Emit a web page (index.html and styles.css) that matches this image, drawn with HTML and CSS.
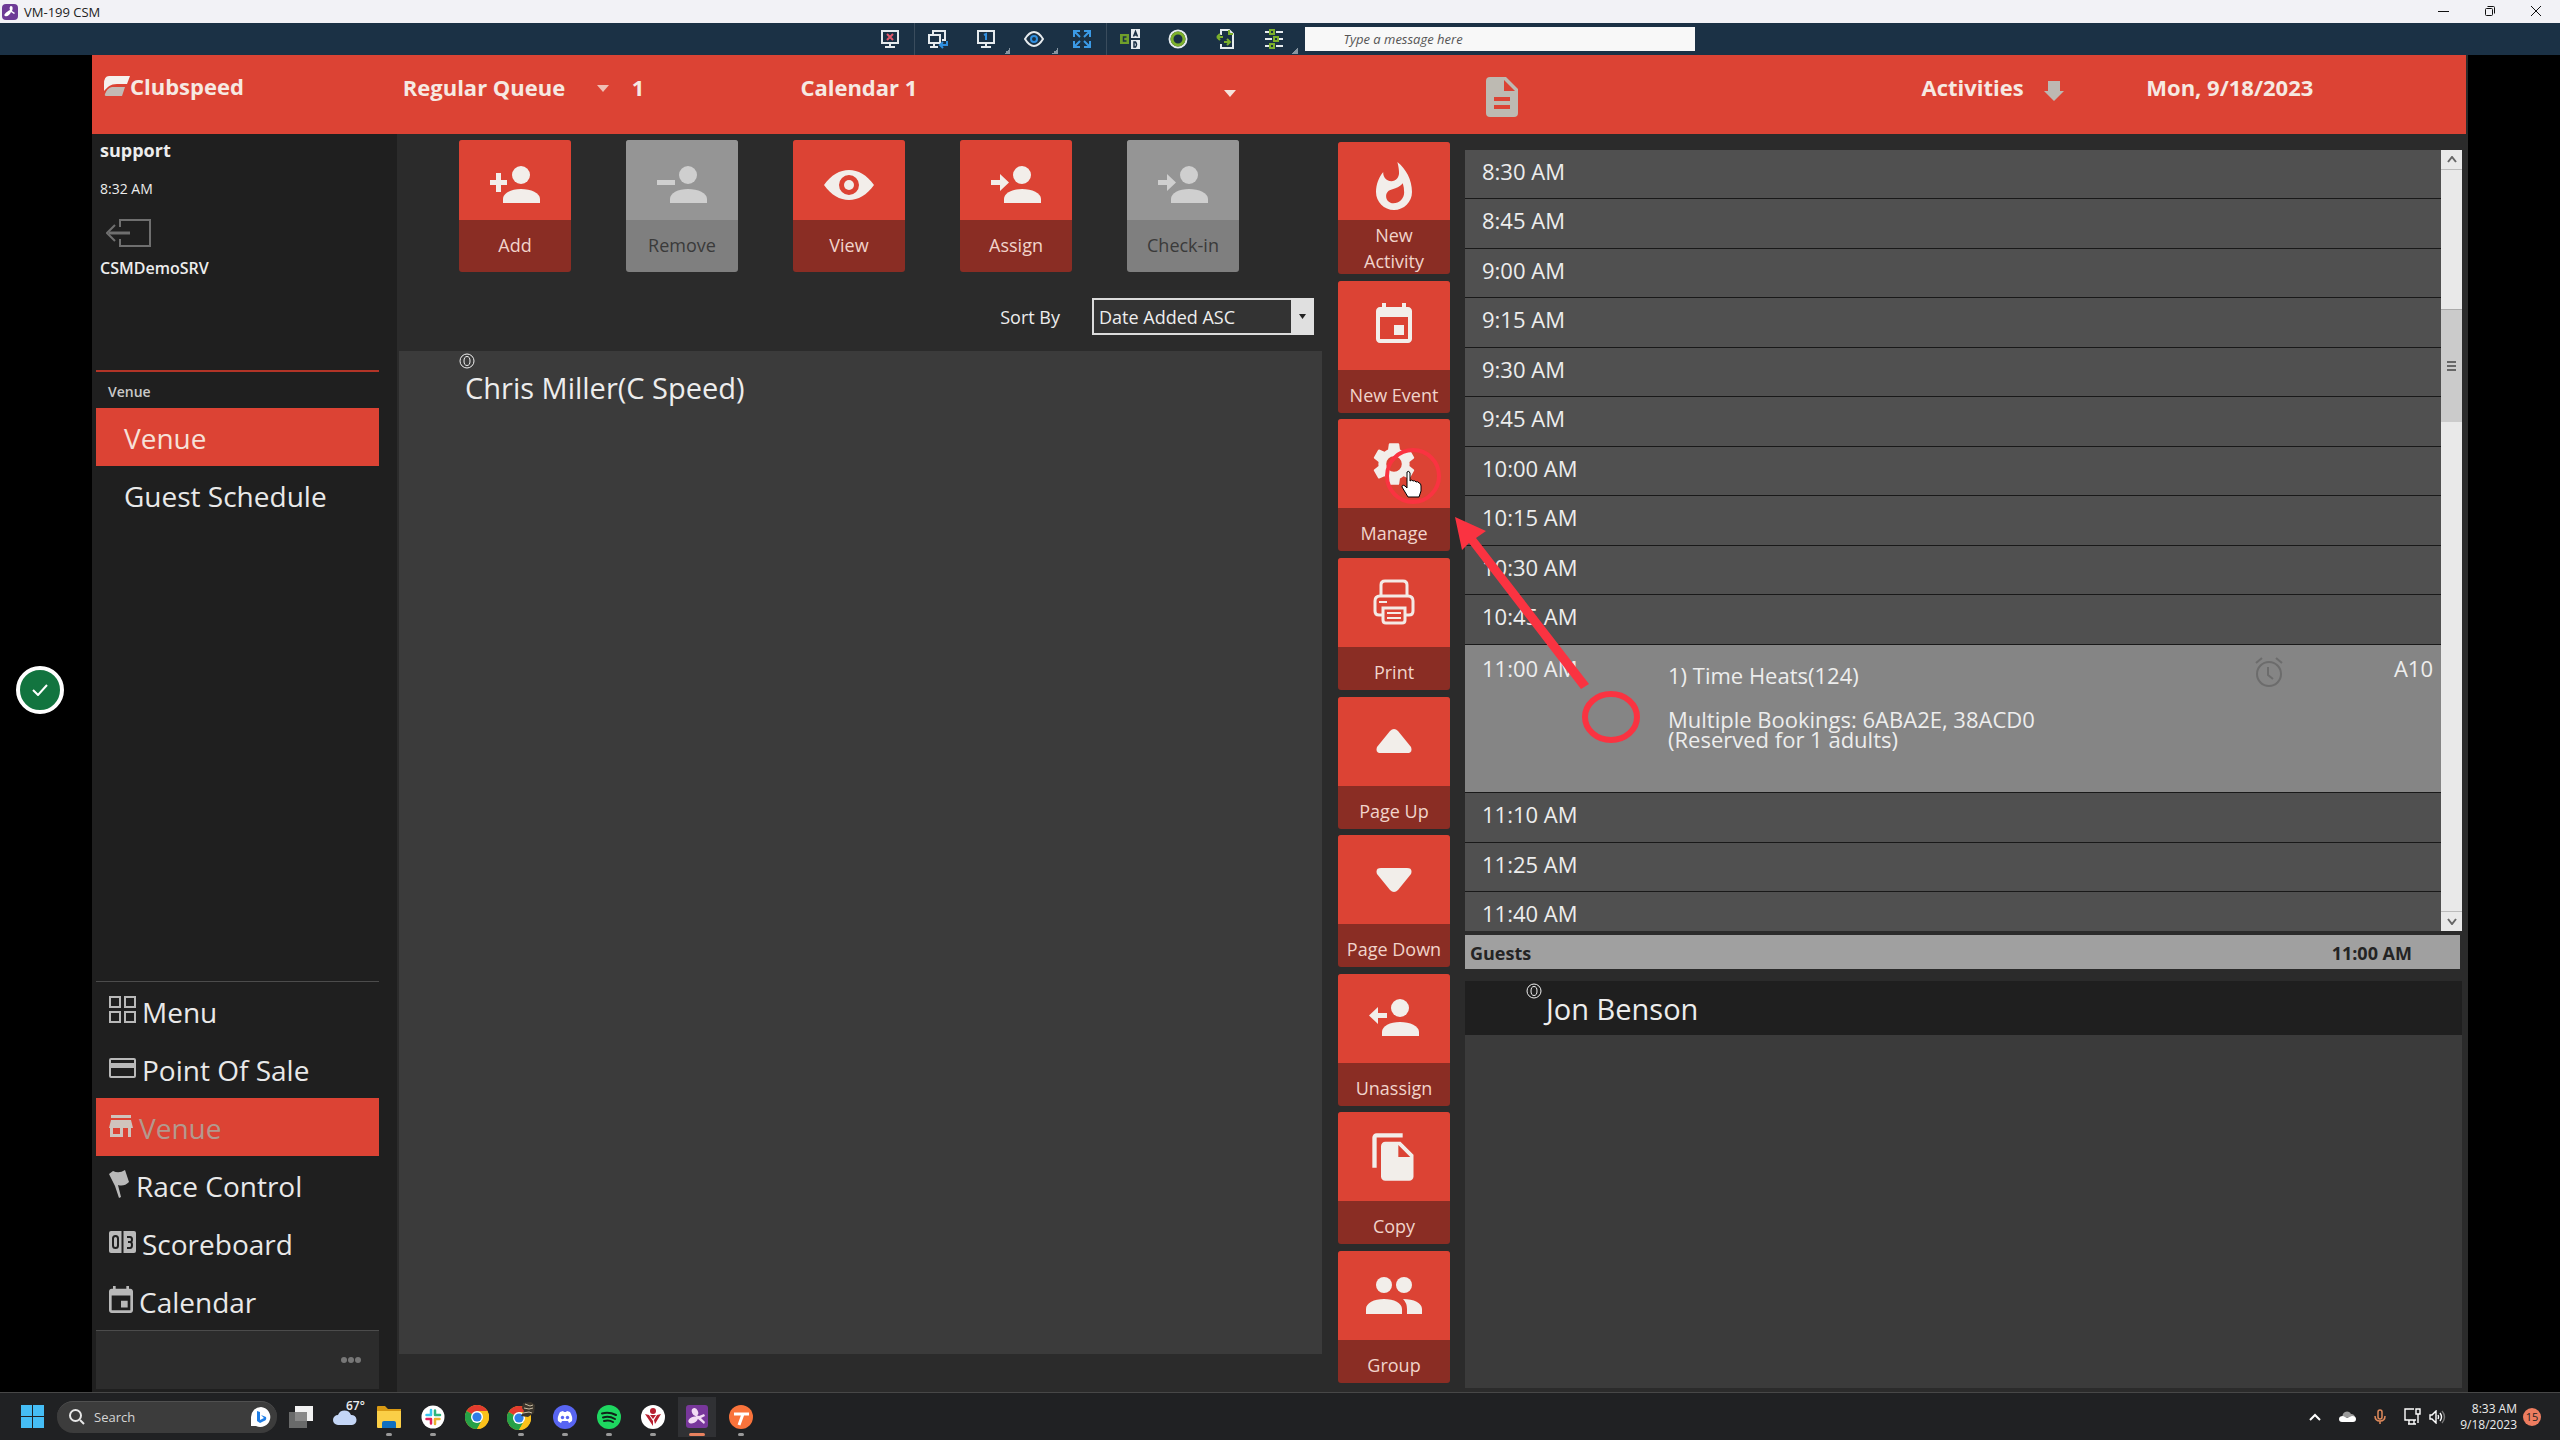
FILE: index.html
```html
<!DOCTYPE html>
<html lang="en">
<head>
<meta charset="utf-8">
<title>VM-199 CSM</title>
<link rel="stylesheet" href="styles.css">
</head>
<body>
<svg class="defs" width="0" height="0" aria-hidden="true">
  <symbol id="person" viewBox="0 0 50 38"><circle cx="31" cy="9" r="9"/><path d="M13 37v-4c0-6 8-10 18-10s19 4 19 10v4z"/></symbol>
  <symbol id="event" viewBox="0 0 24 24"><path d="M17 12h-5v5h5v-5zM16 1v2H8V1H6v2H5c-1.11 0-1.99.9-1.99 2L3 19c0 1.100.89 2 2 2h14c1.100 0 2-.9 2-2V5c0-1.100-.9-2-2-2h-1V1h-2zm3 18H5V8h14v11z"/></symbol>
  <symbol id="chrome" viewBox="0 0 24 24"><circle cx="12" cy="12" r="12" fill="#fbc11a"/><path d="M12 12 1.600 6A12 12 0 0 1 22.400 6z" fill="#e33b2e"/><path d="M12 12 1.600 6A12 12 0 0 0 12 24l5-9z" fill="#26a148"/><path d="M12 6h10.400A12 12 0 0 1 12 24l5.200-9z" fill="#fbc11a"/><circle cx="12" cy="12" r="6" fill="#fff"/><circle cx="12" cy="12" r="4.600" fill="#2f7de9"/></symbol>
  <symbol id="ring" viewBox="0 0 16 16"><g fill="none" stroke="#f0f0f0"><circle cx="8" cy="8" r="7"/><ellipse cx="8" cy="8" rx="3" ry="4.500"/></g></symbol>
</svg>

<header class="titlebar">
  <svg class="app-mark" width="16" height="16" viewBox="0 0 16 16"><rect width="16" height="16" rx="4" fill="#6d3a96"/><path d="M9 2c2 0 2 3 1 5l3 2-1 1-3-2c-1 3-4 5-6 4s1-4 5-6c-1-2 0-4 1-4z" fill="#fff"/></svg>
  <span class="window-title">VM-199 CSM</span>
  <div class="window-controls">
    <button aria-label="Minimize"><svg width="12" height="12" viewBox="0 0 12 12"><path d="M0 6.500h11"/></svg></button>
    <button aria-label="Restore"><svg width="12" height="12" viewBox="0 0 12 12"><rect x="1.500" y="3.500" width="7" height="7" rx="1"/><path d="M3.500 1.500h6q1 0 1 1v6"/></svg></button>
    <button aria-label="Close"><svg width="12" height="12" viewBox="0 0 12 12"><path d="M1 1l10 10M11 1L1 11"/></svg></button>
  </div>
</header>

<nav class="remote-bar" aria-label="Remote session">
  <button class="first" aria-label="Disconnect"><svg width="20" height="20" viewBox="0 0 20 20" fill="none" stroke="#e6ebee" stroke-width="2"><path d="M2 2h16v12H2zM10 14v4M5 18h10"/><path d="M7 5l6 6M13 5l-6 6" stroke="#e2596c"/></svg></button>
  <button class="split" aria-label="Switch screen"><svg width="22" height="20" viewBox="0 0 22 20" fill="none" stroke="#e6ebee" stroke-width="2"><path d="M6 5V2h12v9h-3M2 6h11v8H2zM7 14v4M3 18h8"/><path d="M20 12v4h-6M16 13l-3 3 3 3" stroke="#2f8fe0"/></svg></button>
  <button class="more" aria-label="Monitor 1"><svg width="20" height="20" viewBox="0 0 20 20" fill="none" stroke="#e6ebee" stroke-width="2"><path d="M2 2h16v12H2zM10 14v4M5 18h10"/><path d="M8 6l2-1v6" stroke="#2f8fe0"/></svg></button>
  <button class="more" aria-label="View options"><svg width="20" height="20" viewBox="0 0 20 20" fill="none" stroke="#e6ebee" stroke-width="2"><path d="M1 10c3-5 6-7 9-7s6 2 9 7c-3 5-6 7-9 7s-6-2-9-7z"/><circle cx="10" cy="10" r="3" stroke="#2f8fe0"/></svg></button>
  <button aria-label="Full screen"><svg width="20" height="20" viewBox="0 0 20 20" fill="none" stroke="#3b9ae6" stroke-width="2"><path d="M2 8V2h6M2 2l6 6M12 2h6v6M18 2l-6 6M2 12v6h6M2 18l6-6M18 12v6h-6M18 18l-6-6"/></svg></button>
  <button class="split" aria-label="Send Ctrl Alt Del"><svg width="20" height="20" viewBox="0 0 20 20"><path d="M0 5h9v10H0z" fill="#6f9f2a"/><path d="M11 0h9v9h-9zM11 11h9v9h-9z" fill="#e6ebee"/><g fill="none" stroke="#1b3145" stroke-width="1.500"><path d="M6.500 8h-3v4h3M13.500 7.500l2-5 2 5M14.500 6h2M14 13v5h1.500q2-2.500 0-5z"/></g></svg></button>
  <button aria-label="Session status"><svg width="20" height="20" viewBox="0 0 20 20" fill="none" stroke-width="2"><circle cx="10" cy="10" r="8.500" stroke="#e6ebee"/><circle cx="10" cy="10" r="6" stroke="#7cb02c" stroke-width="3"/></svg></button>
  <button aria-label="File transfer"><svg width="20" height="20" viewBox="0 0 20 20" fill="none" stroke="#e6ebee" stroke-width="2"><path d="M5 6V1h8l4 4v14H5v-4"/><path d="M13 1v4h4M1 8l3-3M1 8l3 3M1 8h6M8 13h6M11 10l3 3-3 3" stroke="#7cb02c"/></svg></button>
  <button class="more" aria-label="Settings"><svg width="20" height="20" viewBox="0 0 20 20" fill="none" stroke="#e6ebee" stroke-width="2"><path d="M1 3h4M12 3h7M1 10h7M15 10h4M1 17h4M12 17h7"/><path d="M6 1h4v4H6zM10 8h4v4h-4zM6 15h4v4H6z" stroke="#7cb02c"/></svg></button>
  <input class="message" type="text" placeholder="Type a message here" aria-label="Message">
</nav>

<div class="stage">
  <div class="app">
    <header class="app-header">
      <a class="logo" href="#"><svg width="27" height="20" viewBox="0 0 27 20"><path d="M6 0h21l-3 8H14C7 8 5 11 1 15V8q0-8 5-8z" fill="#f5f1ee"/><path d="M9 11h13l-3 9H4q-3 0-2-2 2-6 7-7z" fill="#c3bab4"/></svg><span>Clubspeed</span></a>
      <div class="head-cell">
        <select class="queue-select" aria-label="Queue"><option>Regular Queue</option></select>
        <svg class="caret" width="12" height="7" viewBox="0 0 12 7"><path d="M0 0h12L6 7z"/></svg>
        <span class="count">1</span>
      </div>
      <div class="head-cell">
        <select class="calendar-select" aria-label="Calendar"><option>Calendar 1</option></select>
        <svg class="caret low" width="12" height="7" viewBox="0 0 12 7"><path d="M0 0h12L6 7z"/></svg>
      </div>
      <div class="head-cell tall"><button class="bare" aria-label="Notes"><svg width="32" height="40" viewBox="0 0 32 40"><path d="M4 0h16l12 12v24q0 4-4 4H4q-4 0-4-4V4q0-4 4-4z" fill="#bdbab2"/><path d="M18 3v11h11z" fill="#dc4334"/><path d="M8 22h16M8 30h16" stroke="#dc4334" stroke-width="4"/></svg></button></div>
      <div class="head-cell"><span class="activities">Activities</span><button class="bare" aria-label="Scroll down"><svg width="20" height="20" viewBox="0 0 20 20"><path d="M4 0h12v10h4L10 20 0 10h4z" fill="#bdb8b2"/></svg></button></div>
      <div class="head-cell"><span>Mon, 9/18/2023</span></div>
    </header>

    <div class="workspace">
      <aside class="sidebar">
        <section class="user">
          <strong class="user-name">support</strong>
          <time class="user-time">8:32 AM</time>
          <button class="bare logout" aria-label="Log out"><svg width="46" height="28" viewBox="0 0 46 28" fill="none" stroke="#6f6f6f" stroke-width="2"><path d="M14 8V1h30v26H14v-7"/><path d="M24 14H3" stroke-width="3"/><path d="M9 6l-8 8 8 8"/></svg></button>
          <strong class="server">CSMDemoSRV</strong>
        </section>
        <h2 class="group-title">Venue</h2>
        <nav class="subnav">
          <a class="current" href="#">Venue</a>
          <a href="#">Guest Schedule</a>
        </nav>
        <nav class="mainnav">
          <a href="#"><svg width="27" height="27" viewBox="0 0 27 27" fill="none" stroke="#b9b9b9" stroke-width="2"><path d="M1 1h10v10H1zM16 1h10v10H16zM1 16h10v10H1zM16 16h10v10H16z"/></svg>Menu</a>
          <a href="#"><svg width="27" height="20" viewBox="0 0 27 20"><rect x="1" y="1" width="25" height="18" rx="1" fill="none" stroke="#b9b9b9" stroke-width="2"/><path d="M1 5h25v5H1z" fill="#b9b9b9"/></svg>Point Of Sale</a>
          <a class="current dim" href="#"><svg width="24" height="22" viewBox="0 0 24 22" fill="#cfc4bd"><path d="M2 0h20v3H2zM2 5h20l2 8h-2v9h-3v-9h-5v9H1v-9H0zM4 13v6h7v-6z" fill-rule="evenodd"/></svg>Venue</a>
          <a href="#"><svg width="21" height="28" viewBox="0 0 21 28" fill="#b9b9b9"><path d="M0 4l4-3q6 3 12-1l4 12q-5 5-11 3l3 12-2 1L6 16z"/></svg>Race Control</a>
          <a href="#"><svg width="27" height="22" viewBox="0 0 27 22"><rect width="27" height="22" rx="2" fill="#b9b9b9"/><path d="M13.500 0v22" stroke="#1f1f1f" stroke-width="2"/><g fill="none" stroke="#1f1f1f" stroke-width="2"><rect x="4" y="5" width="5" height="12" rx="2.500"/><path d="M18 6h3q2 0 2 2.500T21 11h-2 2q2 0 2 3t-2 3h-3"/></g></svg>Scoreboard</a>
          <a href="#"><svg width="24" height="27" viewBox="3 1 18 20" fill="#b9b9b9" preserveAspectRatio="none"><path d="M17 12h-5v5h5v-5zM16 1v2H8V1H6v2H5c-1.100 0-2 .9-2 2v14c0 1.100.9 2 2 2h14c1.100 0 2-.9 2-2V5c0-1.100-.9-2-2-2h-1V1h-2zm3 18H5V8h14v11z"/></svg>Calendar</a>
        </nav>
        <div class="side-foot"><button class="bare" aria-label="More"><svg width="20" height="6" viewBox="0 0 20 6" fill="#777"><circle cx="3" cy="3" r="3"/><circle cx="10" cy="3" r="3"/><circle cx="17" cy="3" r="3"/></svg></button></div>
      </aside>

      <main class="queue">
        <div class="queue-tools">
          <button class="tile"><span class="tile-icon"><svg width="50" height="38"><use href="#person"/><path d="M0 14h17v5H0zM6 7h5v19H6z"/></svg></span><span class="tile-label">Add</span></button>
          <button class="tile off" disabled><span class="tile-icon"><svg width="50" height="38"><use href="#person"/><path d="M0 14h18v5H0z"/></svg></span><span class="tile-label">Remove</span></button>
          <button class="tile"><span class="tile-icon"><svg width="50" height="30" viewBox="0 0 50 30"><path d="M0 15C7 5 16 0 25 0s18 5 25 15c-7 10-16 15-25 15S7 25 0 15zM25 5a10 10 0 1 0 0 20 10 10 0 0 0 0-20z" fill-rule="evenodd"/><circle cx="25" cy="15" r="5"/></svg></span><span class="tile-label">View</span></button>
          <button class="tile"><span class="tile-icon"><svg width="50" height="38"><use href="#person"/><path d="M0 14h9V8l9 8.500L9 25v-6H0z"/></svg></span><span class="tile-label">Assign</span></button>
          <button class="tile off" disabled><span class="tile-icon"><svg width="50" height="38"><use href="#person"/><path d="M0 14h9V8l9 8.500L9 25v-6H0z"/></svg></span><span class="tile-label">Check-in</span></button>
        </div>
        <div class="sort-row">
          <label for="sort">Sort By</label>
          <div class="select-box">
            <select id="sort"><option>Date Added ASC</option></select>
            <span class="select-arrow"><svg width="7" height="5" viewBox="0 0 7 5"><path d="M0 0h7L3.500 5z" fill="#222"/></svg></span>
          </div>
        </div>
        <ul class="queue-list">
          <li><svg class="badge" width="16" height="16"><use href="#ring"/></svg><span>Chris Miller(C Speed)</span></li>
        </ul>
      </main>

      <div class="actions">
        <button class="tile two-line"><span class="tile-icon"><svg width="36" height="48" viewBox="4 .67 16 21.330"><path d="M13.500.67s.74 2.650.74 4.800c0 2.060-1.350 3.730-3.410 3.730-2.070 0-3.630-1.670-3.630-3.730l.03-.36C5.210 7.510 4 10.620 4 14c0 4.420 3.580 8 8 8s8-3.580 8-8C20 8.610 17.410 3.800 13.500.67zM11.710 19c-1.780 0-3.220-1.400-3.220-3.140 0-1.620 1.050-2.760 2.810-3.120 1.770-.36 3.600-1.210 4.620-2.580.39 1.290.59 2.650.59 4.040 0 2.650-2.150 4.800-4.800 4.800z"/></svg></span><span class="tile-label">New Activity</span></button>
        <button class="tile"><span class="tile-icon"><svg width="48" height="48"><use href="#event"/></svg></span><span class="tile-label">New Event</span></button>
        <button class="tile"><span class="tile-icon"><svg width="52" height="52" viewBox="0 0 24 24"><path d="M19.140 12.940c.04-.3.06-.61.06-.94 0-.32-.02-.64-.07-.94l2.030-1.580c.18-.14.23-.41.12-.61l-1.920-3.320c-.12-.22-.37-.29-.59-.22l-2.390.96c-.5-.38-1.030-.7-1.620-.94L14.400 2.810c-.04-.24-.24-.41-.48-.41h-3.840c-.24 0-.43.17-.47.41L9.250 5.350C8.660 5.590 8.120 5.920 7.630 6.290L5.240 5.330c-.22-.08-.47 0-.59.22L2.740 8.870c-.12.21-.08.47.12.61l2.030 1.580c-.05.3-.09.63-.09.94s.02.64.07.94l-2.030 1.580c-.18.14-.23.41-.12.61l1.920 3.320c.12.22.37.29.59.22l2.390-.96c.5.38 1.030.7 1.620.94l.36 2.540c.05.24.24.41.48.41h3.840c.24 0 .44-.17.47-.41l.36-2.540c.59-.24 1.130-.56 1.620-.94l2.390.96c.22.08.47 0 .59-.22l1.920-3.320c.12-.22.07-.47-.12-.61zM12 15.600A3.600 3.600 0 1 1 12 8.400a3.600 3.600 0 0 1 0 7.200z"/></svg></span><span class="tile-label">Manage</span>
          <svg class="pointer" width="58" height="60" viewBox="0 0 58 60"><circle cx="29" cy="29" r="26" fill="none" stroke="#fa3341" stroke-width="4"/><path d="M23 25q2-2 3 1v8q2-2 3 0 2-1 3 1 2-1 3 1 2 0 2 3v5l-2 6H24l-6-10q0-3 3-1l2 2z" fill="#fff" stroke="#000"/></svg></button>
        <button class="tile"><span class="tile-icon"><svg width="42" height="46" viewBox="0 0 42 46" fill="none" stroke="#f4eae5" stroke-width="3"><path d="M8 17V6q0-4 4-4h18q4 0 4 4v11"/><path d="M9 36H6q-4 0-4-4V22q0-5 5-5h28q5 0 5 5v10q0 4-4 4h-3"/><path d="M10 29h22v12q0 3-3 3H13q-3 0-3-3z"/><path d="M6 23h8M14 34h14M14 39h14" stroke-width="2"/></svg></span><span class="tile-label">Print</span></button>
        <button class="tile"><span class="tile-icon"><svg width="36" height="24" viewBox="0 0 36 24"><path d="M14 2q4-4 8 0l13 16q2 6-4 6H5q-6 0-4-6z"/></svg></span><span class="tile-label">Page Up</span></button>
        <button class="tile"><span class="tile-icon"><svg width="36" height="24" viewBox="0 0 36 24"><path d="M14 22q4 4 8 0L35 6q2-6-4-6H5q-6 0-4 6z"/></svg></span><span class="tile-label">Page Down</span></button>
        <button class="tile"><span class="tile-icon"><svg width="50" height="38"><use href="#person"/><path d="M18 14H9V8l-9 8.500L9 25v-6h9z"/></svg></span><span class="tile-label">Unassign</span></button>
        <button class="tile"><span class="tile-icon"><svg width="52" height="52" viewBox="0 0 24 24"><path d="M16 1H4c-1.100 0-2 .9-2 2v14h2V3h12V1zm-1 4l6 6v10c0 1.100-.9 2-2 2H8c-1.100 0-2-.9-2-2V7c0-1.100.9-2 2-2h7zm-1 7h5.500L14 6.500V12z"/></svg></span><span class="tile-label">Copy</span></button>
        <button class="tile"><span class="tile-icon"><svg width="56" height="38" viewBox="0 0 56 38"><circle cx="18" cy="8" r="8"/><circle cx="38" cy="8" r="8"/><path d="M0 37v-5c0-6 8-10 18-10s18 4 18 10v5zM37 22c11 0 19 4 19 10v5H41v-5q0-6-4-10z"/></svg></span><span class="tile-label">Group</span></button>
      </div>

      <section class="schedule">
        <div class="slots-box">
          <ol class="slots">
            <li>8:30 AM</li><li>8:45 AM</li><li>9:00 AM</li><li>9:15 AM</li><li>9:30 AM</li>
            <li>9:45 AM</li><li>10:00 AM</li><li>10:15 AM</li><li>10:30 AM</li><li>10:45 AM</li>
            <li class="booked">
              <span class="slot-time">11:00 AM</span>
              <div class="booking"><p>1) Time Heats(124)</p><p class="notes">Multiple Bookings: 6ABA2E, 38ACD0<br>(Reserved for 1 adults)</p></div>
              <svg class="alarm" width="28" height="30" viewBox="0 0 28 30" fill="none" stroke="#6c6c6c" stroke-width="2"><circle cx="14" cy="17" r="12"/><path d="M13 10v8l5 4M1 6l6-5M27 6l-6-5"/></svg>
              <span class="slot-code">A10</span>
            </li>
            <li>11:10 AM</li><li>11:25 AM</li><li class="cut">11:40 AM</li>
          </ol>
          <div class="scroll">
            <button aria-label="Scroll up"><svg width="10" height="7" viewBox="0 0 10 7"><path d="M1 6l4-5 4 5"/></svg></button>
            <div class="track"><div class="thumb"><svg width="9" height="11" viewBox="0 0 9 11"><path d="M0 1h9M0 5h9M0 9h9"/></svg></div></div>
            <button aria-label="Scroll down"><svg width="10" height="7" viewBox="0 0 10 7"><path d="M1 1l4 5 4-5"/></svg></button>
          </div>
        </div>
        <header class="guests-head"><span>Guests</span><time>11:00 AM</time></header>
        <ul class="guests">
          <li><svg class="badge" width="16" height="16"><use href="#ring"/></svg><span>Jon Benson</span></li>
        </ul>
      </section>
    </div>
  </div>
</div>

<button class="check-bubble" aria-label="Done"><svg width="16" height="12" viewBox="0 0 16 12"><path d="M1 6l5 5L15 1" fill="none" stroke="#fff" stroke-width="2"/></svg></button>
<svg class="callout" width="200" height="232" viewBox="0 0 200 232"><path d="M4 5l31 14-10 7L138 172l-8 5L18 31l-7 7z" fill="#fa3341"/><ellipse cx="160" cy="205" rx="26" ry="23" fill="none" stroke="#fa3341" stroke-width="6"/></svg>

<footer class="taskbar">
  <button class="bare start" aria-label="Start"><svg width="24" height="24" viewBox="0 0 24 24" fill="#45bdf5"><path d="M0 0h11v11H0zM12 0h11v11H12zM0 12h11v11H0zM12 12h11v11H12z"/></svg></button>
  <div class="search">
    <svg width="16" height="16" viewBox="0 0 16 16" fill="none" stroke="#e8e8e8" stroke-width="2"><circle cx="6.500" cy="6.500" r="5.500"/><path d="M11 11l4 4"/></svg>
    <input type="search" placeholder="Search" aria-label="Search">
    <svg width="20" height="20" viewBox="0 0 20 20"><path d="M10 0a10 10 0 1 1-5 19H0v-9A10 10 0 0 1 10 0z" fill="#fff"/><path d="M6 4l3 1v8l4-2-3-3 5 2q1 3-2 4l-4 2-3-2z" fill="#1f7ee6"/></svg>
  </div>
  <div class="tasks">
    <button aria-label="Task view"><svg width="24" height="22" viewBox="0 0 24 22"><path d="M6 0h18v15H6z" fill="#f2f2f2"/><path d="M0 6h18v16H0z" fill="#777" fill-opacity=".85"/></svg></button>
    <button class="weather" aria-label="Weather"><svg width="24" height="18" viewBox="0 0 24 18"><path d="M5 17a5 5 0 0 1 0-10 7 7 0 0 1 13 0 5 5 0 0 1 1 10z" fill="#c4d6f6"/></svg><span>67°</span></button>
    <button class="open" aria-label="Files"><svg width="24" height="22" viewBox="0 0 24 22"><path d="M0 1q0-1 1-1h7l3 3h13v6H0z" fill="#d99a14"/><path d="M0 5h24v16q0 1-1 1H1q-1 0-1-1z" fill="#fbcf47"/><path d="M5 22v-5q0-2 2-2h10q2 0 2 2v5z" fill="#0f6fc0"/></svg></button>
    <button class="open" aria-label="Slack"><svg width="24" height="24" viewBox="0 0 24 24" fill="none" stroke-width="2.500" stroke-linecap="round"><circle cx="12" cy="12" r="11.500" fill="#fff"/><path d="M10 5v5M5.500 10H10" stroke="#36c5f0"/><path d="M14 5.500V10M14 10h5" stroke="#2eb67d"/><path d="M14 14v5M14 14h4.500" stroke="#ecb22e"/><path d="M5.500 14H10M10 14v4.500" stroke="#e01e5a"/></svg></button>
    <button aria-label="Chrome"><svg width="24" height="24"><use href="#chrome"/></svg></button>
    <button class="open" aria-label="Chrome profile"><svg width="29" height="29" viewBox="0 0 29 29"><use href="#chrome" x="0" y="4" width="24" height="24"/><path d="M16 1l8-1 4 3-1 8-6 4-7-1 3-5-2-3z" fill="#3b352c"/><path d="M18 2l5 2 3-1M17 6l5 1 4-1M16 11l6-1 3 1" stroke="#c9bca2" fill="none"/></svg></button>
    <button class="open" aria-label="Discord"><svg width="24" height="24" viewBox="0 0 24 24"><circle cx="12" cy="12" r="12" fill="#5865f2"/><path d="M7 7l3-1 1 1h2l1-1 3 1q3 5 2 9l-3 2-1-2H9l-1 2-3-2q-1-4 2-9z" fill="#fff"/><circle cx="9.500" cy="12.500" r="1.700" fill="#5865f2"/><circle cx="14.500" cy="12.500" r="1.700" fill="#5865f2"/></svg></button>
    <button class="open" aria-label="Spotify"><svg width="24" height="24" viewBox="0 0 24 24" fill="none" stroke="#10231a" stroke-width="2" stroke-linecap="round"><circle cx="12" cy="12" r="12" fill="#1ed760" stroke="none"/><path d="M5 8.500q7-2 14 1.500M6 12.500q6-2 12 1.500M7 16q5-1.500 9 1"/></svg></button>
    <button class="open" aria-label="Venue client"><svg width="24" height="24" viewBox="0 0 24 24"><circle cx="12" cy="12" r="12" fill="#fff"/><g fill="#b71f30"><circle cx="12" cy="6" r="3"/><path d="M4 9l4 1 4 6v5zM20 9l-4 1-3 5 1 4zM9 10h6l-3 4z"/></g></svg></button>
    <button class="open active" aria-label="Splashtop"><svg width="22" height="23" viewBox="0 0 22 23"><rect width="22" height="23" rx="3" fill="#78379b"/><g fill="#f3dcf4"><ellipse cx="9" cy="7" rx="3" ry="4" transform="rotate(-25 9 7)"/><ellipse cx="7" cy="15" rx="5" ry="3" transform="rotate(-25 7 15)"/><path d="M10 10l3 1 5-2 1 2-4 2 4 4-1 2-6-5-3 1z"/></g></svg></button>
    <button class="open" aria-label="Tango"><svg width="24" height="24" viewBox="0 0 24 24"><circle cx="12" cy="12" r="12" fill="#f9733b"/><path d="M5 9h15M14 9l-4 11" stroke="#fff" stroke-width="3" fill="none"/></svg></button>
  </div>
  <div class="tray">
    <svg width="12" height="8" viewBox="0 0 12 8" fill="none" stroke="#fff" stroke-width="2"><path d="M1 7l5-5 5 5"/></svg>
    <svg width="17" height="12" viewBox="0 0 17 12"><path d="M4 7a4 4 0 0 1 8-4 4 4 0 0 1 4 3z" fill="#9a9a9a"/><path d="M3 11q-3 0-3-3t4-3l4 2 5-2q4 0 4 3t-3 3z" fill="#fff"/></svg>
    <svg width="12" height="16" viewBox="0 0 12 16" fill="none" stroke="#e08a5c" stroke-width="1.500"><rect x="4" y="1" width="4" height="9" rx="2"/><path d="M1 7q0 5 5 5t5-5M6 12v3"/></svg>
    <div class="net"><svg width="17" height="17" viewBox="0 0 17 17" fill="none" stroke="#fff" stroke-width="1.400"><path d="M10 1H1v11h11M4 16h8M5 12v4M10 12v4M14 6v9M12 1h4v5h-4z"/></svg>
    <svg width="17" height="14" viewBox="0 0 17 14" fill="none" stroke="#fff" stroke-width="1.400"><path d="M1 5h2l4-4v12L3 9H1zM9 5q1 2 0 4M11 3q3 4 0 8"/><path d="M13 1q5 6 0 12" stroke="#777"/></svg></div>
    <div class="clock"><span>8:33 AM</span><span>9/18/2023</span></div>
    <span class="notify">15</span>
  </div>
</footer>
</body>
</html>
```
FILE: styles.css
```css
* { box-sizing: border-box; }
body {
  margin: 0;
  height: 100vh;
  display: flex;
  flex-direction: column;
  position: relative;
  overflow: hidden;
  background: #000;
  color: #ededed;
  font-family: "Open Sans", "Noto Sans", sans-serif;
  font-size: 22px;
}
button, input, select { font: inherit; color: inherit; border: 0; padding: 0; margin: 0; background: none; border-radius: 0; }
select { appearance: none; outline: 0; }
a { color: inherit; text-decoration: none; }
ul, ol { list-style: none; margin: 0; padding: 0; }
p, h2 { margin: 0; }
svg { display: block; flex: none; }
.defs { position: absolute; }
.bare { display: flex; }

/* Window title bar */
.titlebar {
  flex: none;
  height: 23px;
  display: flex;
  align-items: center;
  padding: 0 18px 0 2px;
  gap: 6px;
  background: #f2f2f6;
  color: #222;
  font-size: 13px;
}
.window-title { flex: 1; }
.window-controls { display: flex; gap: 34px; padding-bottom: 2px; }
.window-controls svg { fill: none; stroke: #111; }

/* Remote session toolbar */
.remote-bar {
  flex: none;
  height: 32px;
  display: flex;
  align-items: center;
  justify-content: center;
  background: #1b3145;
}
.remote-bar button {
  position: relative;
  width: 48px;
  height: 32px;
  display: flex;
  align-items: center;
  justify-content: center;
}
.remote-bar .split { border-left: 1px solid #3a4c5d; }
.remote-bar .more::after {
  content: "";
  position: absolute;
  right: 0;
  bottom: 1px;
  width: 6px;
  height: 6px;
  background: linear-gradient(135deg, transparent 50%, #8794a0 50%);
}
.message {
  width: 390px;
  height: 24px;
  margin-left: 7px;
  padding-left: 39px;
  background: #f8f8f8;
  color: #222;
  font-size: 13px;
}
.message::placeholder { color: #555; font-style: italic; }

/* Application */
.stage { flex: 1; min-height: 0; display: flex; padding: 0 92px; }
.app { flex: 1; min-width: 0; display: flex; flex-direction: column; background: #2b2b2b; }
.app-header {
  flex: none;
  height: 79px;
  display: grid;
  grid-template-columns: 311fr 398fr 686fr 436fr 225fr 320fr;
  margin-right: 2px;
  background: #dc4334;
  color: #f6e9e2;
  font-weight: 700;
  line-height: 30px;
}
.head-cell { display: flex; align-items: flex-start; padding-top: 17px; }
.head-cell.tall { padding-top: 22px; }
.head-cell .bare { padding-top: 9px; }
.head-cell.tall .bare { padding-top: 0; }
.logo { display: flex; align-items: flex-start; padding: 16px 0 0 11px; }
.logo svg { margin-top: 5px; }
.queue-select { width: 194px; height: 30px; }
.calendar-select { width: 424px; height: 30px; }
.caret { margin-top: 13px; fill: #f0bfb4; }
.caret.low { margin-top: 18px; fill: #f6e3dc; }
.count { padding-left: 23px; }
.activities { width: 123px; }

.workspace {
  flex: 1;
  min-height: 0;
  display: grid;
  grid-template-columns: 305px 941fr 112px 1012fr;
  padding-right: 6px;
}

/* Sidebar */
.sidebar { display: flex; flex-direction: column; padding: 0 18px 3px 4px; background: #1f1f1f; }
.user { display: flex; flex-direction: column; align-items: flex-start; height: 236px; padding: 2px 4px; }
.user-name { font-size: 18px; font-weight: 700; line-height: 28px; }
.user-time { padding-top: 14px; font-size: 14px; line-height: 22px; }
.logout { padding: 19px 0 0 6px; }
.server { padding-top: 8px; font-size: 16px; font-weight: 600; line-height: 26px; }
.group-title {
  height: 38px;
  padding-left: 12px;
  border-top: 2px solid #b23427;
  color: #c9c9c9;
  font-size: 14px;
  font-weight: 600;
  line-height: 39px;
}
.subnav a, .mainnav a { display: flex; align-items: center; height: 58px; font-size: 28px; line-height: 58px; }
.subnav a { padding-left: 28px; padding-top: 2px; }
.subnav, .mainnav { color: #e9e9e9; }
.sidebar .current { background: #dc4334; color: #f6e1d8; }
.sidebar .dim { color: #b3998e; }
.mainnav { margin-top: auto; border-top: 1px solid #4c4c4c; border-bottom: 1px solid #4c4c4c; }
.mainnav a { padding-left: 13px; gap: 6px; padding-top: 2px; }
.mainnav svg { margin-bottom: 5px; }
.side-foot { height: 58px; display: flex; justify-content: flex-end; align-items: center; padding-right: 18px; background: #2c2c2c; }

/* Icon tiles */
.tile {
  position: relative;
  width: 112px;
  height: 132px;
  display: flex;
  flex-direction: column;
  border-radius: 3px;
  background: #8a2d24;
  color: #f1d4cb;
  font-size: 18px;
}
.tile-icon {
  flex: none;
  width: 100%;
  height: 89px;
  display: flex;
  align-items: center;
  justify-content: center;
  border-radius: 3px 3px 0 0;
  background: #dc4334;
}
.tile-icon svg { fill: #f2eeea; }
.tile-label { width: 100%; padding-top: 11px; text-align: center; line-height: 28px; }
.tile.off { background: #7f7f7f; color: #3a3a3a; }
.tile.off .tile-icon { background: #959595; }
.tile.off svg { fill: #cfcfcf; }
.tile-icon svg[fill="none"] { fill: none; }

/* Queue */
.queue { display: flex; flex-direction: column; margin-right: 16px; padding: 6px 0 38px 2px; }
.queue-tools { display: flex; gap: 55px; padding-left: 60px; }
.queue-tools .tile-icon { height: 80px; padding-top: 9px; }
.sort-row { display: flex; align-items: center; justify-content: flex-end; gap: 32px; height: 37px; margin: 26px 8px 16px 0; font-size: 18px; }
.select-box { position: relative; width: 222px; height: 37px; }
.select-box select { width: 100%; height: 100%; padding-left: 5px; border: 2px solid #dcdcdc; background: #333; }
.select-arrow {
  position: absolute;
  inset: 0 0 0 auto;
  width: 23px;
  display: flex;
  align-items: center;
  justify-content: center;
  background: #e0e0e0;
  pointer-events: none;
}
.queue-list { flex: 1; padding: 2px 60px; background: #3b3b3b; }
.queue-list li { font-size: 29px; line-height: 38px; }
.queue-list span { display: block; padding-left: 6px; }

.actions { display: flex; flex-direction: column; justify-content: space-between; padding: 8px 0 9px; }
.two-line .tile-icon { height: 78px; padding-top: 10px; }
.two-line .tile-label { padding: 2px 20px 0; line-height: 26px; }
.pointer { position: absolute; left: 46px; top: 28px; }

/* Schedule */
.schedule { display: flex; flex-direction: column; margin-left: 15px; padding: 16px 0 4px; }
.slots-box { flex: 781; min-height: 0; display: flex; }
.slots {
  flex: 1;
  display: grid;
  grid-template-rows: repeat(10, minmax(0, 100fr)) minmax(0, 300fr) repeat(2, minmax(0, 100fr)) minmax(0, 78fr);
  line-height: 30px;
}
.slots li { padding: 6px 17px 0; overflow: hidden; border-bottom: 1px solid #191919; background: #505050; }
.slots .booked { display: flex; align-items: flex-start; padding: 8px 8px 0 17px; background: #858585; }
.slots .cut { border-bottom: 0; }
.slot-time { width: 186px; }
.booking { flex: 1; padding-top: 8px; }
.notes { padding-top: 20px; }
.booking p { line-height: 28px; }
.booking .notes { line-height: 20px; }
.alarm { margin: 4px 111px 0 0; }
.scroll { width: 21px; display: flex; flex-direction: column; background: #e9e9e9; }
.scroll button { height: 20px; display: flex; align-items: center; justify-content: center; border-bottom: 1px solid #bbb; }
.scroll button:last-child { border-bottom: 0; border-top: 1px solid #bbb; }
.scroll svg { fill: none; stroke: #666; stroke-width: 2; }
.track { flex: 1; padding-top: 139px; }
.thumb { height: 113px; display: flex; align-items: center; justify-content: center; border-top: 1px solid #aaa; background: #cbcbcb; }
.guests-head {
  flex: none;
  height: 34px;
  display: flex;
  align-items: center;
  justify-content: space-between;
  margin: 4px 2px 12px 0;
  padding: 2px 48px 0 5px;
  background: #a0a0a0;
  color: #242424;
  font-size: 18px;
  font-weight: 700;
}
.guests { flex: 407; background: #3b3b3b; }
.guests li { display: flex; height: 54px; padding: 2px 0 0 61px; gap: 4px; background: #1f1f1f; font-size: 29px; line-height: 52px; }

/* Overlays */
.check-bubble {
  position: absolute;
  left: 16px;
  top: 666px;
  width: 48px;
  height: 48px;
  display: flex;
  align-items: center;
  justify-content: center;
  border: 4px solid #fff;
  border-radius: 50%;
  background: #12743f;
}
.callout { position: absolute; left: 1451px; top: 512px; pointer-events: none; }

/* Taskbar */
.taskbar {
  flex: none;
  height: 48px;
  display: flex;
  align-items: center;
  border-top: 1px solid #474747;
  padding: 0 19px 0 21px;
  background: #202123;
  font-size: 13px;
}
.search { width: 220px; height: 32px; display: flex; align-items: center; gap: 9px; margin: 0 2px 0 12px; padding: 0 6px 0 12px; border-radius: 16px; background: #3c3c3c; border-top: 1px solid #505050; }
.search input { flex: 1; min-width: 0; }
.search input::placeholder { color: #d5d5d5; }
.tasks { display: flex; }
.tasks button { position: relative; width: 44px; height: 46px; display: flex; align-items: center; justify-content: center; }
.weather span { position: absolute; left: 23px; top: 4px; font-size: 12px; line-height: 16px; font-weight: 600; }
.tasks .open::after { content: ""; position: absolute; bottom: 4px; left: 19px; width: 6px; height: 3px; border-radius: 2px; background: #999; }
.tasks .active { background: linear-gradient(#303134, #303134) center / 38px 40px no-repeat; }
.tasks .active::after { left: 14px; width: 16px; background: #e8825f; }
.tray { display: flex; align-items: center; gap: 18px; margin-left: auto; }
.net { display: flex; gap: 8px; align-items: center; }
.clock { display: flex; flex-direction: column; align-items: flex-end; margin-left: -4px; line-height: 16px; font-size: 12px; }
.notify { width: 18px; height: 18px; margin-left: -12px; border-radius: 9px; background: #ee7d60; color: #222; font-size: 11px; line-height: 17px; text-align: center; }
```
